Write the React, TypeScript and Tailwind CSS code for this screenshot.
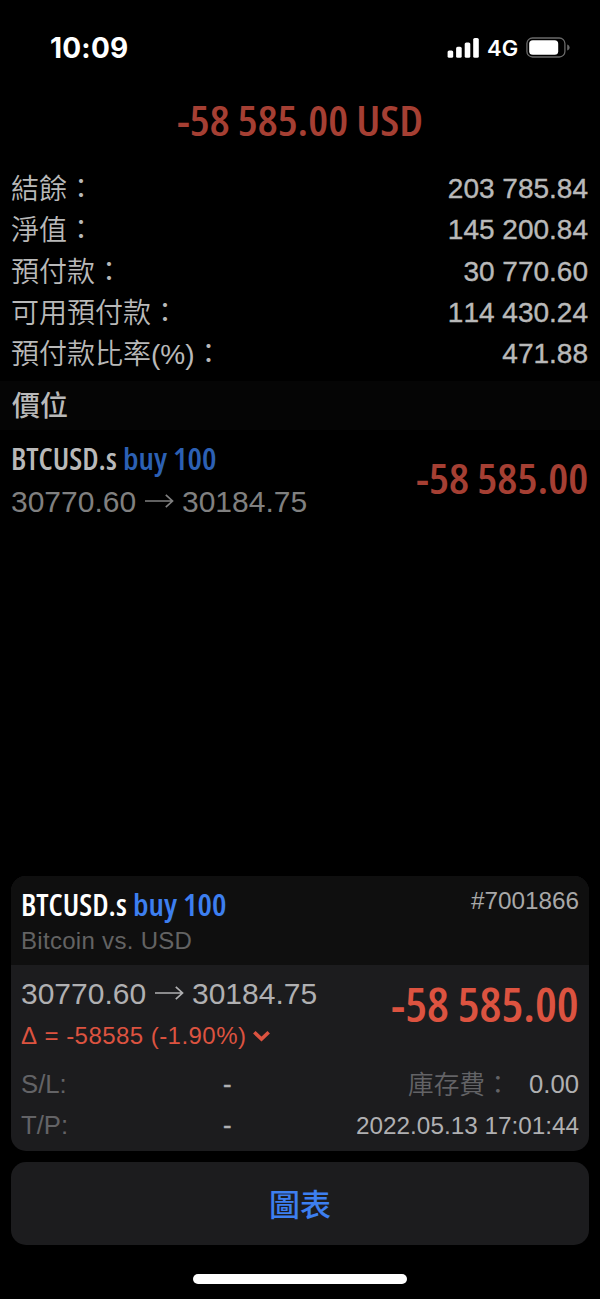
import { useLayoutEffect, useRef, useState } from "react";
import { clsx } from "clsx";

type CondensedProps = {
  text: string;
  className: string;
  fromRight?: boolean;
};

/** Condensed display text: the glyphs are squeezed to the width of the box. */
function Condensed({ text, className, fromRight }: CondensedProps) {
  const box = useRef<HTMLSpanElement>(null);
  const inner = useRef<HTMLSpanElement>(null);
  const [scale, setScale] = useState(1);

  useLayoutEffect(() => {
    if (box.current && inner.current) {
      setScale(box.current.clientWidth / inner.current.offsetWidth);
    }
  }, [text]);

  return (
    <span
      ref={box}
      className={clsx(
        "flex shrink-0 whitespace-nowrap font-['Open_Sans',sans-serif] font-semibold [font-stretch:75%]",
        fromRight ? "justify-end" : "justify-start",
        className,
      )}
    >
      <span
        ref={inner}
        className={clsx("block shrink-0", fromRight ? "origin-right" : "origin-left")}
        style={{ transform: `scaleX(${scale})` }}
      >
        {text}
      </span>
    </span>
  );
}

const summary = [
  { label: "結餘：", value: "203 785.84" },
  { label: "淨值：", value: "145 200.84" },
  { label: "預付款：", value: "30 770.60" },
  { label: "可用預付款：", value: "114 430.24" },
  { label: "預付款比率(%)：", value: "471.88" },
];

function StatusBar() {
  return (
    <header className="flex h-[94px] shrink-0 items-center justify-between pl-[50px] pr-[30px] pt-px text-white">
      <span className="font-['Inter',sans-serif] text-[28px] font-bold leading-none tracking-[0.2px]">10:09</span>
      <div className="flex items-center">
        <svg width="32" height="20" viewBox="0 0 32 20" fill="currentColor">
          <rect x="0.6" y="12.5" width="5.6" height="7.3" rx="1.6" />
          <rect x="9.1" y="8.8" width="5.6" height="11" rx="1.6" />
          <rect x="17.7" y="4.4" width="5.6" height="15.4" rx="1.6" />
          <rect x="26.2" y="0" width="5.6" height="19.8" rx="1.6" />
        </svg>
        <span className="ml-[8px] w-[39px] whitespace-nowrap pt-px font-['Inter',sans-serif] text-[22px] font-semibold leading-none">
          4G
        </span>
        <svg width="44" height="22" viewBox="0 0 44 22" fill="none">
          <rect x="0.9" y="1" width="38" height="19" rx="5.6" stroke="#6a6a6a" strokeWidth="1.3" />
          <rect x="3.2" y="3.2" width="29" height="14.6" rx="3.6" fill="#fff" />
          <path d="M41.2 7.4c1.6.6 2.4 1.8 2.4 3.1s-.8 2.5-2.4 3.1z" fill="#6a6a6a" />
        </svg>
      </div>
    </header>
  );
}

function Arrow() {
  return (
    <svg width="29" height="14" viewBox="0 0 29 14" fill="none" stroke="currentColor" strokeWidth="1.7">
      <path d="M0 7h27.5M20.8 0.8L27.5 7l-6.7 6.2" />
    </svg>
  );
}

function Prices({ className }: { className: string }) {
  return (
    <div className={clsx("flex items-center text-[30px]", className)}>
      <span className="w-[134px]">30770.60</span>
      <Arrow />
      <span className="ml-[8px]">30184.75</span>
    </div>
  );
}

export default function App() {
  return (
    <div className="flex h-[1299px] w-[600px] flex-col overflow-hidden bg-black font-['Liberation_Sans','Noto_Sans_CJK_TC',sans-serif] text-[#b9b9b9] [font-kerning:none]">
      <StatusBar />

      <h1 className="flex h-[52px] shrink-0 justify-center text-[#a53f33]">
        <Condensed text="-58 585.00 USD" className="w-[246px] text-[42px] leading-[52px]" />
      </h1>

      <dl className="mt-[22px] flex h-[213px] shrink-0 flex-col pl-[11px] pr-[12px]">
        {summary.map((row) => (
          <div key={row.label} className="flex h-[41.3px] shrink-0 items-center justify-between">
            <dt className="pt-[2px] text-[28px] font-[350] leading-[41px]">{row.label}</dt>
            <dd className="text-[28px] leading-[41px] [-webkit-text-stroke:0.4px_#b9b9b9]">{row.value}</dd>
          </div>
        ))}
      </dl>

      <h2 className="h-[49px] shrink-0 bg-[#050505] pl-[12px] pt-[2px] text-[28px] font-medium leading-[48px]">
        價位
      </h2>

      <section className="flex h-[100px] shrink-0 justify-between pl-[11px] pr-[12px]">
        <div className="flex flex-col">
          <div className="mt-[10px] flex h-[38px]">
            <Condensed text="BTCUSD.s" className="w-[106px] text-[30px] leading-[38px]" />
            <Condensed text="buy 100" className="ml-[6px] w-[94px] text-[30px] leading-[38px] text-[#2c60b4]" />
          </div>
          <Prices className="mt-[4px] h-[38px] text-[#808080]" />
        </div>
        <Condensed
          text="-58 585.00"
          fromRight
          className="mt-[22px] h-[52px] w-[172px] text-[42px] leading-[52px] text-[#a53f33]"
        />
      </section>

      <div className="grow" />

      <article className="mx-[11px] mb-[11px] flex h-[275px] shrink-0 flex-col overflow-hidden rounded-[15px] bg-[#1c1c1e]">
        <div className="flex h-[89px] shrink-0 justify-between bg-[#0f0f0f] px-[10px]">
          <div>
            <div className="mt-[10px] flex h-[38px]">
              <Condensed text="BTCUSD.s" className="w-[106px] text-[30px] leading-[38px] text-white" />
              <Condensed text="buy 100" className="ml-[6px] w-[94px] text-[30px] leading-[38px] text-[#3d7ff0]" />
            </div>
            <p className="mt-[2px] text-[24px] leading-[30px] tracking-[0.3px] text-[#636363]">Bitcoin vs. USD</p>
          </div>
          <span className="mt-[10px] text-[24.3px] leading-[30px] text-[#a8a8a8]">#7001866</span>
        </div>

        <div className="flex h-[99px] shrink-0 justify-between px-[10px]">
          <div>
            <Prices className="mt-[9px] h-[38px] text-[#b0b0b2]" />
            <div className="mt-[8px] flex h-[32px] items-center text-[24px] text-[#dc5340]">
              <span className="tracking-[0.45px]">Δ = -58585 (-1.90%)</span>
              <svg className="ml-[7px]" width="17" height="12" viewBox="0 0 17 12" fill="none" stroke="currentColor" strokeWidth="3.6">
                <path d="M1.3 2.2L8.5 9l7.2-6.8" />
              </svg>
            </div>
          </div>
          <Condensed
            text="-58 585.00"
            fromRight
            className="mt-[11px] h-[56px] w-[188px] text-[46px] leading-[56px] text-[#dc5340]"
          />
        </div>

        <div className="grid grid-cols-[202px_1fr_auto] px-[10px] text-[25.7px] leading-[41px]">
          <span className="text-[#636366]">S/L:</span>
          <span className="text-[#b0b0b2] [-webkit-text-stroke:0.4px_#b0b0b2]">-</span>
          <span className="flex h-[41px] justify-end">
            <span className="w-[121px] whitespace-nowrap pt-px font-[350] text-[#636366]">庫存費：</span>
            <span className="text-[#b0b0b2]">0.00</span>
          </span>
          <span className="text-[#636366]">T/P:</span>
          <span className="text-[#b0b0b2] [-webkit-text-stroke:0.4px_#b0b0b2]">-</span>
          <span className="text-[24.3px] text-[#b0b0b2]">2022.05.13 17:01:44</span>
        </div>
      </article>

      <button className="mx-[11px] h-[83px] shrink-0 rounded-[15px] bg-[#1c1c1e] pt-[6px] text-[31px] font-medium text-[#3d7ff0]">
        圖表
      </button>

      <div className="flex h-[54px] shrink-0 justify-center pt-[29px]">
        <div className="h-[10px] w-[214px] rounded-full bg-white" />
      </div>
    </div>
  );
}
